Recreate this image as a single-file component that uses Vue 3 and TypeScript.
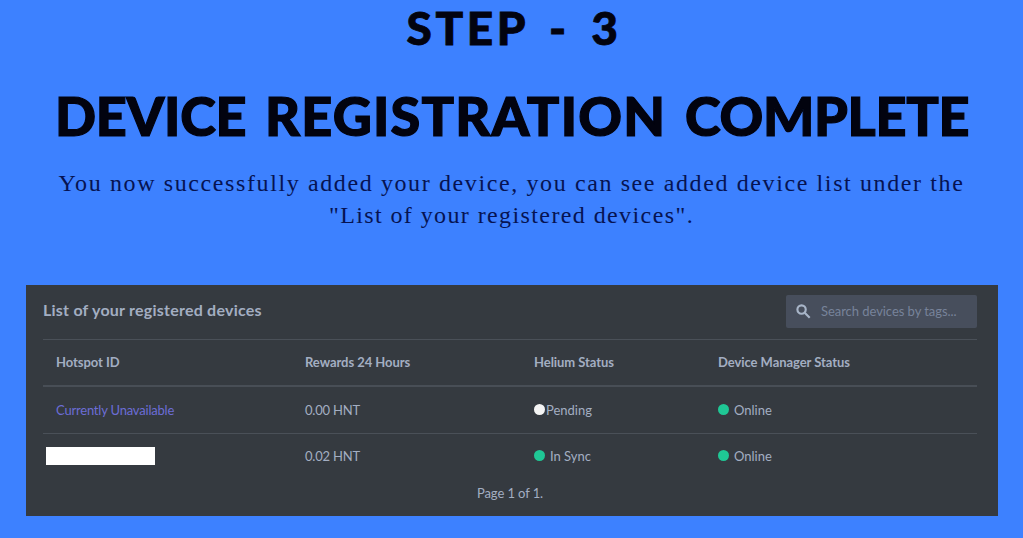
<script setup lang="ts">
type Tone = 'pending' | 'ok'

interface Device {
  hotspot: string | null
  rewards: string
  helium: string
  heliumTone: Tone
  manager: string
}

const devices: Device[] = [
  { hotspot: 'Currently Unavailable', rewards: '0.00 HNT', helium: 'Pending', heliumTone: 'pending', manager: 'Online' },
  { hotspot: null, rewards: '0.02 HNT', helium: 'In Sync', heliumTone: 'ok', manager: 'Online' },
]
</script>

<template>
  <main class="page">
    <h2 class="step">STEP - 3</h2>
    <h1 class="title">
      <span class="w1">DEVICE</span> <span class="w2">REGISTRATION</span> <span class="w3">COMPLETE</span>
    </h1>
    <p class="lead">
      <span class="lead-a">You now successfully added your device, you can see added device list under the</span><br />
      <span class="lead-b">"List of your registered devices".</span>
    </p>

    <section class="card">
      <header class="card-head">
        <h3 class="card-title">List of your registered devices</h3>
        <label class="search">
          <svg class="search-icon" viewBox="0 0 14 14" aria-hidden="true">
            <circle cx="5.2" cy="5.2" r="3.9" />
            <path d="M8.1 8.1 L12.8 12.8" />
          </svg>
          <span class="placeholder">Search devices by tags...</span>
        </label>
      </header>

      <div class="row head">
        <span>Hotspot ID</span>
        <span>Rewards 24 Hours</span>
        <span>Helium Status</span>
        <span>Device Manager Status</span>
      </div>
      <div v-for="(device, i) in devices" :key="i" class="row body">
        <span v-if="device.hotspot" class="link">{{ device.hotspot }}</span>
        <span v-else class="redacted"></span>
        <span class="rewards">{{ device.rewards }}</span>
        <span class="status" :class="device.heliumTone"><i class="dot"></i>{{ device.helium }}</span>
        <span class="status ok"><i class="dot"></i>{{ device.manager }}</span>
      </div>
      <footer class="pager">Page 1 of 1.</footer>
    </section>
  </main>
</template>

<style>
body {
  margin: 0;
  background: #3d81ff;
}
</style>

<style scoped>
.page {
  width: 1023px;
  height: 538px;
  overflow: hidden;
  background: #3d81ff;
  color: #02030f;
  text-align: center;
  white-space: nowrap;
}
h1, h2, h3, p {
  margin: 0;
}
.step {
  height: 56px;
  padding-left: 5px;
  font: 900 46px/55px Lato, "Liberation Sans", sans-serif;
  letter-spacing: 3.5px;
  word-spacing: 7px;
  -webkit-text-stroke: 0.8px #02030f;
}
.title {
  display: flex;
  height: 111px;
  padding-left: 55px;
  font: 900 54px/120px Lato, "Liberation Sans", sans-serif;
  -webkit-text-stroke: 1.2px #02030f;
}
.w1 {
  width: 210px;
  text-align: left;
  letter-spacing: -0.3px;
}
.w2 {
  width: 420px;
  text-align: left;
  letter-spacing: 1.2px;
}
.w3 {
  letter-spacing: -0.3px;
}
.lead {
  height: 118px;
  color: #061352;
  font: 24px/32px "Liberation Serif", serif;
}
.lead-a {
  letter-spacing: 1.61px;
}
.lead-b {
  letter-spacing: 1.4px;
}
.card {
  box-sizing: border-box;
  width: 972px;
  height: 231px;
  margin-left: 26px;
  padding: 0 21px 0 17px;
  background: #353a40;
  color: #a3aec2;
  font: 13px/20px Lato, "Noto Sans", sans-serif;
  text-align: left;
}
.card-head {
  display: flex;
  justify-content: space-between;
  height: 54px;
}
.card-title {
  padding-top: 13px;
  font-size: 16px;
  line-height: 24px;
  font-weight: 700;
  letter-spacing: 0.23px;
}
.search {
  display: flex;
  align-items: center;
  box-sizing: border-box;
  width: 191px;
  height: 33px;
  margin-top: 10px;
  padding-left: 10px;
  border-radius: 2px;
  background: #474e5c;
}
.search-icon {
  width: 15px;
  height: 15px;
  margin-right: 10px;
  fill: none;
  stroke: #a8b5c8;
  stroke-width: 2;
}
.placeholder {
  padding-bottom: 2px;
  color: #77839a;
  letter-spacing: -0.05px;
}
.row {
  display: grid;
  grid-template-columns: 249px 229px 184px 1fr;
  align-items: center;
  box-sizing: border-box;
  height: 44px;
  padding-left: 13px;
  border-top: 1px solid #4a5058;
}
.head {
  height: 46px;
  padding-bottom: 2px;
  font-weight: 700;
  letter-spacing: -0.06px;
}
.head + .body {
  height: 48px;
  border-top: 2px solid #484e56;
}
.link {
  color: #6c6dd6;
  letter-spacing: -0.2px;
}
.rewards {
  letter-spacing: -0.2px;
}
.redacted {
  width: 109px;
  height: 18px;
  margin-left: -10px;
  background: #fff;
}
.status {
  display: flex;
  align-items: center;
}
.dot {
  width: 11px;
  height: 11px;
  margin: 0 5px 1px 0;
  border-radius: 50%;
  background: #1fc795;
}
.pending .dot {
  margin-right: 1px;
  background: #f4f4f4;
}
.pager {
  padding-top: 6px;
  padding-left: 434px;
  letter-spacing: -0.1px;
}
</style>
